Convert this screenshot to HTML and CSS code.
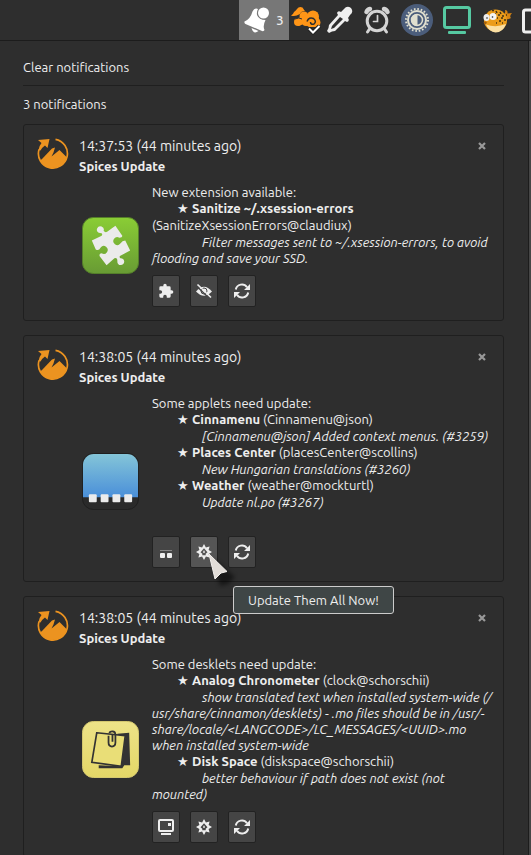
FILE: index.html
```html
<!DOCTYPE html>
<html lang="en">
<head>
<meta charset="utf-8">
<title>Notifications</title>
<link rel="stylesheet" href="styles.css">
</head>
<body>
<svg class="sprite" aria-hidden="true">
  <linearGradient id="green" x1="0" y1="0" x2="0" y2="1"><stop offset="0" stop-color="#8acd35"/><stop offset="1" stop-color="#689b34"/></linearGradient>
  <linearGradient id="blue" x1="0" y1="0" x2="0" y2="1"><stop offset="0" stop-color="#84c5d8"/><stop offset="1" stop-color="#4a8fd9"/></linearGradient>
  <linearGradient id="yellow" x1="0" y1="0" x2="0" y2="1"><stop offset="0" stop-color="#ede388"/><stop offset="1" stop-color="#e4d767"/></linearGradient>
  <symbol id="spices" viewBox="0 0 32 32">
    <path d="M18.500 2.300A14.500 14.500 0 1 1 2 12.500" fill="none" stroke="#ec9320" stroke-width="1.700"/>
    <path d="M1 3 12.500 2 10.500 11 8 8.500Q5 10.500 3.500 13.500L1.500 13Q2 9 4.500 6Z" fill="#ec9320"/>
    <path d="M5 22 15 11.500 18 10.500 16.500 15.500 14.500 19.500 22.500 13 30 20.500A14.800 14.800 0 0 1 3 23.500Z" fill="#ec9320"/>
  </symbol>
  <symbol id="puzzle" viewBox="0 0 24 24">
    <path fill="currentColor" d="M20.500 11H19V7a2 2 0 0 0-2-2h-4V3.500a2.500 2.500 0 0 0-5 0V5H4a2 2 0 0 0-2 2v3.800h1.500a2.700 2.700 0 0 1 0 5.400H2V20a2 2 0 0 0 2 2h3.800v-1.500a2.700 2.700 0 0 1 5.400 0V22H17a2 2 0 0 0 2-2v-4h1.500a2.500 2.500 0 0 0 0-5z"/>
  </symbol>
  <symbol id="hide" viewBox="0 0 16 16">
    <path d="M0 8.500Q8-1 16 8.500Q8 17 0 8.500Z" fill="currentColor"/><circle cx="8" cy="8" r="3" fill="none" stroke="#454545" stroke-width="1"/>
    <path d="M1 3.500 13 15" stroke="#454545" stroke-width="1.500"/><path d="M1.500 1.500 15 14.500" stroke="currentColor" stroke-width="1.700"/>
  </symbol>
  <symbol id="refresh" viewBox="0 0 16 16">
    <path d="M1.800 6.500A6.200 6.200 0 0 1 13 4.200M14.200 9.500A6.200 6.200 0 0 1 3 11.800" fill="none" stroke="currentColor" stroke-width="2"/>
    <path d="M16 1v6h-6ZM0 15V9h6Z" fill="currentColor"/>
  </symbol>
  <symbol id="gear" viewBox="0 0 16 16">
    <path fill="currentColor" fill-rule="evenodd" d="M8 0 9.900 3.400 13.600 2.400 12.600 6.100 16 8 12.600 9.900 13.600 13.600 9.900 12.600 8 16 6.100 12.600 2.400 13.600 3.400 9.900 0 8 3.400 6.100 2.400 2.400 6.100 3.400ZM8 4.300 4.500 8.300 6.300 9.800V11.300H9.700V9.800L11.500 8.300Z"/>
    <path d="M8 6.800V9" stroke="currentColor" stroke-width="1.400"/>
  </symbol>
  <symbol id="applet" viewBox="0 0 16 16">
    <path d="M2 6.500H14" stroke="#888" stroke-width="1"/><rect x="2" y="9" width="5" height="5" rx="1" fill="currentColor"/><rect x="9" y="9" width="5" height="5" rx="1" fill="currentColor"/>
  </symbol>
  <symbol id="desklet" viewBox="0 0 16 16">
    <rect x="1" y="1" width="14" height="11" rx="1" fill="none" stroke="currentColor" stroke-width="2"/><path d="M10 4h3v3h-3ZM3 14h10v2H3Z" fill="currentColor"/>
  </symbol>
</svg>

<header class="bar">
  <button class="tray active" aria-label="Notifications">
    <svg width="26" height="28" viewBox="0 0 26 28"><path d="M14 3Q10.500 1.500 8.500 5.500Q6.500 13 .500 15.500Q0 17 1.500 18L18 25Q20 25.500 20.500 24Q18.500 20 21.500 14Q15 14 13 9Q12.500 5.500 14 3Z" fill="#fff"/><path d="M7.500 22 14.500 25Q9.500 29 7.500 22Z" fill="#fff"/><circle cx="19.500" cy="7" r="5.500" fill="#fff"/></svg>
    <span class="count">3</span>
  </button>
  <button class="tray narrow" aria-label="Applet">
    <svg width="32" height="32" viewBox="0 0 32 32"><g fill="#ff9517"><path d="M1 11.500Q3 11 4 8Q6 6.500 7 5Q9 2 12.500 3.500Q14 6 15 7Q11 7 10 10Q5 13 1 11.500Z"/><circle cx="8" cy="18" r="4"/><circle cx="14" cy="12" r="4.500"/><circle cx="23" cy="12.500" r="6"/><circle cx="16" cy="18" r="4"/><circle cx="26" cy="18.500" r="4.500"/><path d="M8 14 22 9 29 14 25 23H19L14 20 8 22Z"/></g><path d="M17 17.500Q19 12.500 23.500 14.500Q27 17.500 24 20Q20.500 21 20.500 18" fill="none" stroke="#2e2e2e" stroke-width="1.500"/><path d="M5 15Q9 13 12 15" fill="none" stroke="#2e2e2e" stroke-width="1"/><path d="M19 24.500 23 28.500 29.500 22" stroke="#222" stroke-width="4" fill="none"/><path d="M19 24.500 23 28.500 29.500 22" stroke="#fff" stroke-width="2" fill="none"/></svg>
  </button>
  <button class="tray narrow" aria-label="Color picker">
    <svg width="28" height="28" viewBox="0 0 28 28"><path fill="#eee" fill-rule="evenodd" d="M18 3Q21-1 25 2Q28 6 24 9L22 12Q24 15 21 16L19 15 9 25Q6 25 3 27L1 25Q3 22 3 19L12 9 11 7Q12 4 15 6ZM14 11 6 20 5 23 8 22 17 13Z"/></svg>
  </button>
  <button class="tray" aria-label="Alarm">
    <svg width="28" height="28" viewBox="0 0 28 28" fill="none" stroke="#d4d4d4" stroke-linecap="round"><circle cx="14" cy="15" r="9.800" stroke-width="3"/><path d="M14.500 9.500V15.500H10.500" stroke-width="1.700"/><path d="M3.500 6Q4.500 3.500 7 3M24.500 6Q23.500 3.500 21 3" stroke-width="4.500"/><path d="M6.500 23 4.500 26M21.500 23 23.500 26" stroke-width="3"/></svg>
  </button>
  <button class="tray" aria-label="Brightness">
    <svg width="32" height="32" viewBox="0 0 32 32" fill="none" stroke="#e0dfcf"><circle cx="16" cy="16" r="16" fill="#4b5d7b" stroke="none"/><circle cx="16" cy="16" r="11" stroke-width="2" stroke-dasharray="1.600 1.856"/><circle cx="16" cy="16" r="9" stroke-width="2"/><circle cx="16" cy="16" r="5.500" stroke-width="1.500"/><path d="M16 10.500a5.500 5.500 0 0 0 0 11Z" fill="#e0dfcf"/></svg>
  </button>
  <button class="tray" aria-label="Display">
    <svg width="28" height="28" viewBox="0 0 28 28"><rect x="1.500" y="1.500" width="25" height="20" rx="2" fill="none" stroke="#56c9a2" stroke-width="3"/><rect x="5" y="25" width="18" height="3" rx="1" fill="#56c9a2"/></svg>
  </button>
  <button class="tray" aria-label="Blowfish">
    <svg width="30" height="28" viewBox="0 0 30 28"><path d="M21 8Q24 8 23 4Q26 4 25.500 7.500L30 7Q27 10 29 12Q25 14 22 13Z" fill="#d98512"/><ellipse cx="13.500" cy="14.500" rx="11.500" ry="11" fill="#eb9c1b"/><path d="M4 18.500Q14 22 24 18Q21 26.500 13.500 26.500Q7 26 4 18.500Z" fill="#fbdfa2"/><path d="M10 4.500h2M14 5l1 2M18 6l1 2M21 9v2M16 9h2M19 12h2M23 13v2M17 15h2M20 17h1M15 12h1M13 8h1M14 17h1M24 9h1" stroke="#433013" stroke-width="1.500"/><ellipse cx="4.500" cy="11.500" rx="3" ry="3.500" fill="#eee"/><circle cx="11" cy="10.500" r="3.500" fill="#f4f4f4"/><circle cx="5" cy="12" r=".8" fill="#222"/><circle cx="10.500" cy="11" r=".8" fill="#222"/><path d="M1.500 16.500Q3 14.500 5 16.500Q4 19 2.500 18Z" fill="#a8620c"/></svg>
  </button>
  <button class="tray clipped" aria-label="Window">
    <svg width="28" height="28" viewBox="0 0 28 28"><rect x="1.500" y="4" width="25" height="22" rx="2" fill="none" stroke="#eee" stroke-width="3"/></svg>
  </button>
</header>

<main class="panel">
  <button class="clear">Clear notifications</button>
  <p class="total">3 notifications</p>

  <article class="card">
    <header class="head">
      <svg class="app" aria-hidden="true"><use href="#spices"/></svg>
      <div class="title"><time>14:37:53 (44 minutes ago)</time><h2>Spices Update</h2></div>
      <button class="close" aria-label="Dismiss"><svg width="8" height="8" viewBox="0 0 8 8"><path d="M1 1 7 7M7 1 1 7" stroke="#999" stroke-width="2.200"/></svg></button>
    </header>
    <div class="body">
      <svg class="picture" viewBox="0 0 58 58" aria-hidden="true"><rect x=".5" y=".5" width="57" height="57" rx="11" fill="url(#green)" stroke="#55802a"/><path fill="#ebebeb" d="M10 24 20 19Q22 16 17 16A3.500 3.500 0 1 1 22 14Q24 17 27 14L34 9 41 19Q41 21 38 21A4 4 0 1 0 39 27Q41 24 44 24L49 34 40 39Q37 40 39 42A3.500 3.500 0 1 1 36 45Q36 41 33 42L25 49 18 40Q17 37 20 37A4 4 0 1 0 19 31Q17 35 14 33Z"/></svg>
      <div class="text">
        <p>New extension available:</p>
        <p class="item"><span class="star">★</span><b>Sanitize ~/.xsession-errors</b><br>(SanitizeXsessionErrors@claudiux)</p>
        <p class="note">Filter messages sent to ~/.xsession-errors, to avoid<br>flooding and save your SSD.</p>
        <div class="actions">
          <button aria-label="Extensions"><svg><use href="#puzzle"/></svg></button>
          <button aria-label="Hide"><svg><use href="#hide"/></svg></button>
          <button aria-label="Refresh"><svg><use href="#refresh"/></svg></button>
        </div>
      </div>
    </div>
  </article>

  <article class="card">
    <header class="head">
      <svg class="app" aria-hidden="true"><use href="#spices"/></svg>
      <div class="title"><time>14:38:05 (44 minutes ago)</time><h2>Spices Update</h2></div>
      <button class="close" aria-label="Dismiss"><svg width="8" height="8" viewBox="0 0 8 8"><path d="M1 1 7 7M7 1 1 7" stroke="#999" stroke-width="2.200"/></svg></button>
    </header>
    <div class="body">
      <svg class="picture" viewBox="0 0 58 58" aria-hidden="true"><rect x=".5" y=".5" width="57" height="57" rx="11" fill="#2a2a2a" stroke="#202020"/><path d="M1 45V12A11 11 0 0 1 12 1H46A11 11 0 0 1 57 12V45Z" fill="url(#blue)"/><g fill="#ebebeb"><rect x="7" y="42" width="8" height="8" rx="1"/><rect x="19" y="42" width="8" height="8" rx="1"/><rect x="31" y="42" width="8" height="8" rx="1"/><rect x="43" y="42" width="8" height="8" rx="1"/></g></svg>
      <div class="text">
        <p>Some applets need update:</p>
        <p class="item"><span class="star">★</span><b>Cinnamenu</b> (Cinnamenu@json)</p>
        <p class="note">[Cinnamenu@json] Added context menus. (#3259)</p>
        <p class="item"><span class="star">★</span><b>Places Center</b> (placesCenter@scollins)</p>
        <p class="note">New Hungarian translations (#3260)</p>
        <p class="item"><span class="star">★</span><b>Weather</b> (weather@mockturtl)</p>
        <p class="note">Update nl.po (#3267)</p>
        <p class="item"><br></p>
        <div class="actions">
          <button aria-label="Applets"><svg><use href="#applet"/></svg></button>
          <div class="hovered">
            <button class="hot" aria-label="Update all" aria-describedby="tip"><svg><use href="#gear"/></svg></button>
            <svg class="pointer" viewBox="0 0 30 36" aria-hidden="true"><path d="M5 5 27 24 20 31 12 33Z" fill="#000" opacity=".5" class="shade"/><path d="M1 1 19 18.500 13 20 7 26Z" fill="#e2ddd8" stroke="#f3f0ed"/></svg>
            <span class="tip" id="tip" role="tooltip">Update Them All Now!</span>
          </div>
          <button aria-label="Refresh"><svg><use href="#refresh"/></svg></button>
        </div>
      </div>
    </div>
  </article>

  <article class="card">
    <header class="head">
      <svg class="app" aria-hidden="true"><use href="#spices"/></svg>
      <div class="title"><time>14:38:05 (44 minutes ago)</time><h2>Spices Update</h2></div>
      <button class="close" aria-label="Dismiss"><svg width="8" height="8" viewBox="0 0 8 8"><path d="M1 1 7 7M7 1 1 7" stroke="#999" stroke-width="2.200"/></svg></button>
    </header>
    <div class="body">
      <svg class="picture" viewBox="0 0 58 58" aria-hidden="true"><rect x=".5" y=".5" width="57" height="57" rx="11" fill="url(#yellow)" stroke="#d6ca70"/><path d="M36 13 48 12 49 45 43 45 41 48 17 48 17 45 40 46 44 17 36 16Z" fill="#333"/><path d="M15 12 44 15 40 46 10 42Z" fill="#e9de77" stroke="#333" stroke-width="1.700"/><path d="M27 15V22Q27 26 30.500 26Q34 26 34 22V14Q34 10.500 31 10.500Q28 10.500 28 12.500M31 14V21" fill="none" stroke="#333" stroke-width="1.800"/></svg>
      <div class="text">
        <p>Some desklets need update:</p>
        <p class="item"><span class="star">★</span><b>Analog Chronometer</b> (clock@schorschii)</p>
        <p class="note">show translated text when installed system-wide (/<br>usr/share/cinnamon/desklets) - .mo files should be in /usr/-<br>share/locale/&lt;LANGCODE&gt;/LC_MESSAGES/&lt;UUID&gt;.mo<br>when installed system-wide</p>
        <p class="item"><span class="star">★</span><b>Disk Space</b> (diskspace@schorschii)</p>
        <p class="note">better behaviour if path does not exist (not<br>mounted)</p>
        <div class="actions">
          <button aria-label="Desklets"><svg><use href="#desklet"/></svg></button>
          <button aria-label="Update all"><svg><use href="#gear"/></svg></button>
          <button aria-label="Refresh"><svg><use href="#refresh"/></svg></button>
        </div>
      </div>
    </div>
  </article>
</main>
</body>
</html>
```
FILE: styles.css
```css
* { box-sizing: border-box; margin: 0; }
html { height: 100%; overflow: hidden; background: #464646; }
body {
  height: 100%;
  overflow: hidden;
  color: #eee;
  font: 13px/16px "Ubuntu", "Noto Sans", sans-serif;
}
button { padding: 0; border: 0; background: none; color: inherit; font: inherit; }
svg { display: block; flex: none; }
.sprite { position: absolute; width: 0; height: 0; }

.bar {
  display: flex;
  justify-content: flex-end;
  height: 41px;
  overflow: hidden;
  background: #2e2e2e;
  border-bottom: 1px solid #1c1c1c;
}
.tray { display: flex; flex: none; align-items: center; justify-content: center; width: 40px; }
.tray.narrow { width: 34px; }
.tray.clipped { justify-content: flex-start; width: 14px; padding-left: 5px; }
.tray.active { gap: 6px; width: 50px; background: #777; }
.count { font-size: 13px; font-weight: 500; }

.panel {
  min-height: 100%;
  margin-right: 2px;
  padding: 16px 24px 16px 23px;
  background: #2e2e2e;
  border-right: 1px solid #1c1c1c;
}
.clear { display: block; width: 100%; height: 29px; padding-bottom: 8px; border-bottom: 1px solid #1f1f1f; text-align: left; }
.total { margin: 10px 0 12px; }

.card { margin-bottom: 14px; padding: 11px 13px 13px; border: 1px solid #1f1f1f; border-radius: 3px; }
.head { display: flex; gap: 10px; height: 40px; }
.app { width: 32px; height: 32px; margin-top: 1px; }
.title { flex: 1; line-height: 20px; }
.title time { display: block; font-size: 14px; }
.title h2 { font-size: 13px; line-height: 20px; }
.close { width: 16px; height: 20px; display: flex; align-items: center; justify-content: center; }

.body { display: flex; align-items: center; gap: 13px; margin-top: 8px; padding-left: 45px; }
.picture { width: 57px; height: 57px; }
.text { flex: 1; min-width: 0; white-space: nowrap; }
.item { line-height: 17px; text-indent: 25px; }
.star { display: inline-block; width: 15px; text-indent: 0; font-family: "DejaVu Sans", sans-serif; }
.note { font-style: italic; text-indent: 50px; }

.actions { display: flex; gap: 10px; margin-top: 9px; }
.actions button {
  display: flex;
  align-items: center;
  justify-content: center;
  width: 28px;
  height: 32px;
  background: #454545;
  border: 1px solid #222;
  border-radius: 2px;
}
.actions button svg { width: 16px; height: 16px; }
.actions .hot { background: #555; }
.hovered { position: relative; }
.pointer { position: absolute; z-index: 3; left: 18px; top: 17px; width: 30px; height: 36px; }
.shade { filter: blur(2px); }
.tip {
  position: absolute;
  z-index: 2;
  left: 43px;
  top: 50px;
  padding: 5px 14px;
  background: #3f4646;
  border: 1px solid #ccc;
  border-radius: 3px;
}
```
